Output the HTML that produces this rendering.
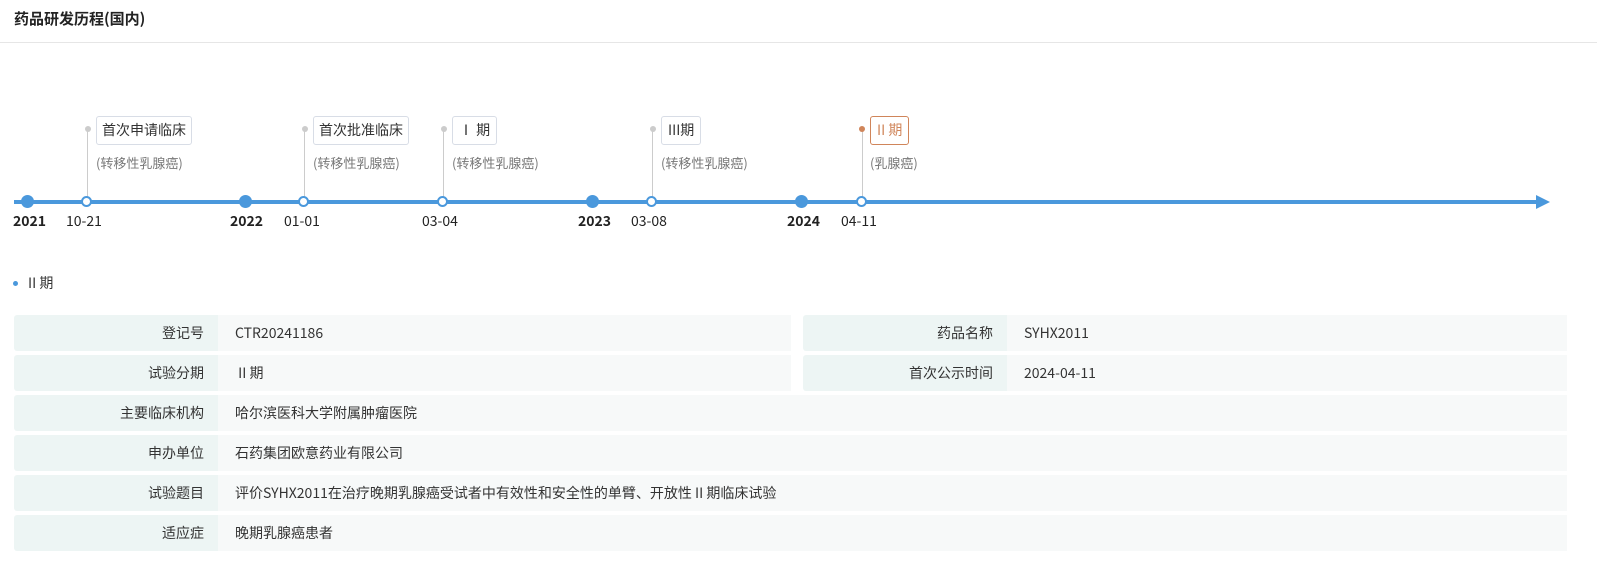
<!DOCTYPE html>
<html><head><meta charset="utf-8"><style>
*{margin:0;padding:0;box-sizing:border-box}
body{width:1597px;height:572px;background:#fff;font-family:"Noto Sans CJK SC","Liberation Sans",sans-serif;color:#333;position:relative;overflow:hidden}
.a{position:absolute}
.hdr{left:14px;top:8px;font-size:15px;font-weight:bold;color:#222}
.hl{left:0;top:42px;width:1597px;height:1px;background:#e6e6e6}
.line{left:14px;top:200px;width:1528px;height:4px;background:#4a98dc}
.arrow{left:1536px;top:195px;width:0;height:0;border-top:7px solid transparent;border-bottom:7px solid transparent;border-left:14px solid #4a98dc}
.big{width:13px;height:13px;border-radius:50%;background:#4a98dc;top:195px}
.sm{width:11px;height:11px;border-radius:50%;background:#fff;border:2px solid #4a98dc;top:196px}
.vl{width:1px;background:#ccc;top:130px;height:67px}
.vd{width:6px;height:6px;border-radius:50%;background:#ccc;top:126px}
.yr{top:211px;font-size:14px;font-weight:bold;color:#222}
.dt{top:211px;font-size:14px;color:#222}
.box{top:116px;height:29px;border:1px solid #d8dde6;border-radius:3px;font-size:14px;padding:0 5px;line-height:27px;color:#333;background:#fff}
.sub{top:153px;font-size:13px;color:#777}
.lab{background:#edf5f4;height:36px;font-size:14px;color:#333;text-align:right;padding-right:14px;line-height:36px;border-radius:3px 0 0 3px}
.val{background:#f7f9f9;height:36px;font-size:14px;color:#333;padding-left:17px;line-height:36px}
</style></head><body>
<div class="a hdr">药品研发历程(国内)</div>
<div class="a hl"></div>
<div class="a line"></div><div class="a arrow"></div>

<div class="a big" style="left:21px"></div>
<div class="a big" style="left:239px"></div>
<div class="a big" style="left:586px"></div>
<div class="a big" style="left:795px"></div>

<div class="a vl" style="left:87px"></div><div class="a vd" style="left:85px"></div>
<div class="a vl" style="left:304px"></div><div class="a vd" style="left:302px"></div>
<div class="a vl" style="left:443px"></div><div class="a vd" style="left:441px"></div>
<div class="a vl" style="left:652px"></div><div class="a vd" style="left:650px"></div>
<div class="a vl" style="left:862px"></div><div class="a vd" style="left:859px;background:#d0855a"></div>

<div class="a sm" style="left:81px"></div>
<div class="a sm" style="left:298px"></div>
<div class="a sm" style="left:437px"></div>
<div class="a sm" style="left:646px"></div>
<div class="a sm" style="left:856px"></div>

<div class="a box" style="left:96px">首次申请临床</div>
<div class="a box" style="left:313px">首次批准临床</div>
<div class="a box" style="left:452px;padding:0 6px">Ⅰ 期</div>
<div class="a box" style="left:661px;padding:0 6px">III期</div>
<div class="a box" style="left:870px;border-color:#d0855a;color:#d0855a;padding:0 6px">II 期</div>

<div class="a sub" style="left:96px">(转移性乳腺癌)</div>
<div class="a sub" style="left:313px">(转移性乳腺癌)</div>
<div class="a sub" style="left:452px">(转移性乳腺癌)</div>
<div class="a sub" style="left:661px">(转移性乳腺癌)</div>
<div class="a sub" style="left:870px">(乳腺癌)</div>

<div class="a yr" style="left:13px">2021</div>
<div class="a dt" style="left:66px">10-21</div>
<div class="a yr" style="left:230px">2022</div>
<div class="a dt" style="left:284px">01-01</div>
<div class="a dt" style="left:422px">03-04</div>
<div class="a yr" style="left:578px">2023</div>
<div class="a dt" style="left:631px">03-08</div>
<div class="a yr" style="left:787px">2024</div>
<div class="a dt" style="left:841px">04-11</div>

<div class="a" style="left:13px;top:281px;width:5px;height:5px;border-radius:50%;background:#4a98dc"></div>
<div class="a" style="left:28px;top:273px;font-size:14px;color:#333">II 期</div>

<div class="a lab" style="left:14px;top:315px;width:204px">登记号</div>
<div class="a val" style="left:218px;top:315px;width:573px">CTR20241186</div>
<div class="a lab" style="left:803px;top:315px;width:204px">药品名称</div>
<div class="a val" style="left:1007px;top:315px;width:560px">SYHX2011</div>

<div class="a lab" style="left:14px;top:355px;width:204px">试验分期</div>
<div class="a val" style="left:218px;top:355px;width:573px">&nbsp;II 期</div>
<div class="a lab" style="left:803px;top:355px;width:204px">首次公示时间</div>
<div class="a val" style="left:1007px;top:355px;width:560px">2024-04-11</div>

<div class="a lab" style="left:14px;top:395px;width:204px">主要临床机构</div>
<div class="a val" style="left:218px;top:395px;width:1349px">哈尔滨医科大学附属肿瘤医院</div>
<div class="a lab" style="left:14px;top:435px;width:204px">申办单位</div>
<div class="a val" style="left:218px;top:435px;width:1349px">石药集团欧意药业有限公司</div>
<div class="a lab" style="left:14px;top:475px;width:204px">试验题目</div>
<div class="a val" style="left:218px;top:475px;width:1349px">评价SYHX2011在治疗晚期乳腺癌受试者中有效性和安全性的单臂、开放性 II 期临床试验</div>
<div class="a lab" style="left:14px;top:515px;width:204px">适应症</div>
<div class="a val" style="left:218px;top:515px;width:1349px">晚期乳腺癌患者</div>
</body></html>
